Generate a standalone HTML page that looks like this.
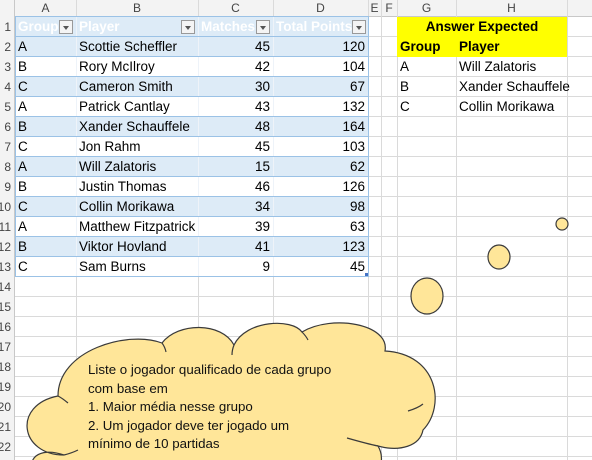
<!DOCTYPE html>
<html><head><meta charset="utf-8"><style>
*{margin:0;padding:0;box-sizing:border-box}
body{width:592px;height:460px;overflow:hidden;background:#fff;position:relative;font-family:"Liberation Sans",sans-serif;font-size:13.5px;color:#000}
.hl{position:absolute;left:0;width:592px;height:1px;background:#dadada}
.vl{position:absolute;top:0;height:460px;width:1px;background:#dadada}
.c{position:absolute;height:20px;line-height:20px;white-space:nowrap;overflow:hidden;padding:0 3px}
.r{text-align:right}
.band{position:absolute;left:15px;width:353px;height:20px;background:#ddebf7}
.tl{position:absolute;left:15px;width:353px;height:1px;background:#9bc2e6}
.tv{position:absolute;top:17px;width:1px;height:260px;background:#eef3f9}
.ch{position:absolute;top:0;height:16px;line-height:16px;text-align:center;color:#444;font-size:12px}
.rh{position:absolute;left:-8px;width:19px;height:20px;line-height:20px;text-align:right;color:#444;font-size:12px}
.dd{position:absolute;width:14px;height:14px;border:1px solid #999;background:#f4f4f4;top:20px}
.dd:after{content:"";position:absolute;left:3px;top:5px;border-left:3px solid transparent;border-right:3px solid transparent;border-top:4px solid #555}
.w{color:#fff;font-weight:bold}
</style></head><body>
<div style="position:absolute;left:0;top:0;width:592px;height:16px;background:#f3f3f3"></div>
<!-- bands -->
<div class="band" style="top:17px"></div>
<div class="band" style="top:37px"></div>
<div class="band" style="top:77px"></div>
<div class="band" style="top:117px"></div>
<div class="band" style="top:157px"></div>
<div class="band" style="top:197px"></div>
<div class="band" style="top:237px"></div>
<!-- grid -->
<div class="hl" style="top:16px;background:#c8c8c8"></div>
<div class="hl" style="top:36px"></div><div class="hl" style="top:56px"></div><div class="hl" style="top:76px"></div><div class="hl" style="top:96px"></div><div class="hl" style="top:116px"></div><div class="hl" style="top:136px"></div><div class="hl" style="top:156px"></div><div class="hl" style="top:176px"></div><div class="hl" style="top:196px"></div><div class="hl" style="top:216px"></div><div class="hl" style="top:236px"></div><div class="hl" style="top:256px"></div><div class="hl" style="top:276px"></div><div class="hl" style="top:296px"></div><div class="hl" style="top:316px"></div><div class="hl" style="top:336px"></div><div class="hl" style="top:356px"></div><div class="hl" style="top:376px"></div><div class="hl" style="top:396px"></div><div class="hl" style="top:416px"></div><div class="hl" style="top:436px"></div><div class="hl" style="top:456px"></div>
<div class="vl" style="left:76px"></div><div class="vl" style="left:198px"></div><div class="vl" style="left:273px"></div><div class="vl" style="left:368px"></div><div class="vl" style="left:381px"></div><div class="vl" style="left:397px"></div><div class="vl" style="left:456px"></div><div class="vl" style="left:567px"></div>
<div style="position:absolute;left:0;top:0;width:15px;height:460px;background:#f3f3f3;border-right:1px solid #c8c8c8"></div>
<div style="position:absolute;left:397px;top:17px;width:170px;height:40px;background:#ffff00"></div>
<!-- table borders -->
<div class="tv" style="left:76px"></div><div class="tv" style="left:198px"></div><div class="tv" style="left:273px"></div>
<div class="tl" style="top:16px"></div><div class="tl" style="top:36px"></div><div class="tl" style="top:56px"></div><div class="tl" style="top:76px"></div><div class="tl" style="top:96px"></div><div class="tl" style="top:116px"></div><div class="tl" style="top:136px"></div><div class="tl" style="top:156px"></div><div class="tl" style="top:176px"></div><div class="tl" style="top:196px"></div><div class="tl" style="top:216px"></div><div class="tl" style="top:236px"></div><div class="tl" style="top:256px"></div><div class="tl" style="top:276px"></div>
<div style="position:absolute;left:15px;top:16px;width:1px;height:261px;background:#9bc2e6"></div>
<div style="position:absolute;left:368px;top:16px;width:1px;height:261px;background:#9bc2e6"></div>
<div style="position:absolute;left:365px;top:273px;width:3px;height:3px;background:#4472c4"></div>
<!-- column headers -->
<div class="ch" style="left:15px;width:61px">A</div><div class="ch" style="left:76px;width:122px">B</div><div class="ch" style="left:198px;width:75px">C</div><div class="ch" style="left:273px;width:95px">D</div><div class="ch" style="left:368px;width:13px">E</div><div class="ch" style="left:381px;width:16px">F</div><div class="ch" style="left:397px;width:59px">G</div><div class="ch" style="left:456px;width:111px">H</div>
<!-- row headers -->
<div class="rh" style="top:17px">1</div><div class="rh" style="top:37px">2</div><div class="rh" style="top:57px">3</div><div class="rh" style="top:77px">4</div><div class="rh" style="top:97px">5</div><div class="rh" style="top:117px">6</div><div class="rh" style="top:137px">7</div><div class="rh" style="top:157px">8</div><div class="rh" style="top:177px">9</div><div class="rh" style="top:197px">10</div><div class="rh" style="top:217px">11</div><div class="rh" style="top:237px">12</div><div class="rh" style="top:257px">13</div><div class="rh" style="top:277px">14</div><div class="rh" style="top:297px">15</div><div class="rh" style="top:317px">16</div><div class="rh" style="top:337px">17</div><div class="rh" style="top:357px">18</div><div class="rh" style="top:377px">19</div><div class="rh" style="top:397px">20</div><div class="rh" style="top:417px">21</div><div class="rh" style="top:437px">22</div>
<!-- header row -->
<div class="c w" style="left:15px;top:17px;width:45px">Group</div>
<div class="c w" style="left:76px;top:17px;width:105px">Player</div>
<div class="c w" style="left:198px;top:17px;width:59px">Matches</div>
<div class="c w" style="left:273px;top:17px;width:80px">Total Points</div>
<div class="dd" style="left:59px"></div><div class="dd" style="left:181px"></div><div class="dd" style="left:256px"></div><div class="dd" style="left:352px"></div>
<!-- data -->
<div class="c" style="left:15px;top:37px">A</div><div class="c" style="left:76px;top:37px">Scottie Scheffler</div><div class="c r" style="left:198px;top:37px;width:75px">45</div><div class="c r" style="left:273px;top:37px;width:95px">120</div>
<div class="c" style="left:15px;top:57px">B</div><div class="c" style="left:76px;top:57px">Rory McIlroy</div><div class="c r" style="left:198px;top:57px;width:75px">42</div><div class="c r" style="left:273px;top:57px;width:95px">104</div>
<div class="c" style="left:15px;top:77px">C</div><div class="c" style="left:76px;top:77px">Cameron Smith</div><div class="c r" style="left:198px;top:77px;width:75px">30</div><div class="c r" style="left:273px;top:77px;width:95px">67</div>
<div class="c" style="left:15px;top:97px">A</div><div class="c" style="left:76px;top:97px">Patrick Cantlay</div><div class="c r" style="left:198px;top:97px;width:75px">43</div><div class="c r" style="left:273px;top:97px;width:95px">132</div>
<div class="c" style="left:15px;top:117px">B</div><div class="c" style="left:76px;top:117px">Xander Schauffele</div><div class="c r" style="left:198px;top:117px;width:75px">48</div><div class="c r" style="left:273px;top:117px;width:95px">164</div>
<div class="c" style="left:15px;top:137px">C</div><div class="c" style="left:76px;top:137px">Jon Rahm</div><div class="c r" style="left:198px;top:137px;width:75px">45</div><div class="c r" style="left:273px;top:137px;width:95px">103</div>
<div class="c" style="left:15px;top:157px">A</div><div class="c" style="left:76px;top:157px">Will Zalatoris</div><div class="c r" style="left:198px;top:157px;width:75px">15</div><div class="c r" style="left:273px;top:157px;width:95px">62</div>
<div class="c" style="left:15px;top:177px">B</div><div class="c" style="left:76px;top:177px">Justin Thomas</div><div class="c r" style="left:198px;top:177px;width:75px">46</div><div class="c r" style="left:273px;top:177px;width:95px">126</div>
<div class="c" style="left:15px;top:197px">C</div><div class="c" style="left:76px;top:197px">Collin Morikawa</div><div class="c r" style="left:198px;top:197px;width:75px">34</div><div class="c r" style="left:273px;top:197px;width:95px">98</div>
<div class="c" style="left:15px;top:217px">A</div><div class="c" style="left:76px;top:217px;width:121px">Matthew Fitzpatrick</div><div class="c r" style="left:198px;top:217px;width:75px">39</div><div class="c r" style="left:273px;top:217px;width:95px">63</div>
<div class="c" style="left:15px;top:237px">B</div><div class="c" style="left:76px;top:237px">Viktor Hovland</div><div class="c r" style="left:198px;top:237px;width:75px">41</div><div class="c r" style="left:273px;top:237px;width:95px">123</div>
<div class="c" style="left:15px;top:257px">C</div><div class="c" style="left:76px;top:257px">Sam Burns</div><div class="c r" style="left:198px;top:257px;width:75px">9</div><div class="c r" style="left:273px;top:257px;width:95px">45</div>
<!-- answer -->
<div class="c" style="left:397px;top:17px;width:170px;text-align:center;font-weight:bold">Answer Expected</div>
<div class="c" style="left:397px;top:37px;font-weight:bold">Group</div><div class="c" style="left:456px;top:37px;font-weight:bold">Player</div>
<div class="c" style="left:397px;top:57px">A</div><div class="c" style="left:456px;top:57px">Will Zalatoris</div>
<div class="c" style="left:397px;top:77px">B</div><div class="c" style="left:456px;top:77px;width:136px">Xander Schauffele</div>
<div class="c" style="left:397px;top:97px">C</div><div class="c" style="left:456px;top:97px">Collin Morikawa</div>
<!-- cloud -->
<svg style="position:absolute;left:0;top:0" width="592" height="460">
<g fill="#ffe699" stroke="#3a3a3a" stroke-width="1.2">
<ellipse cx="562" cy="224" rx="6" ry="6"/>
<ellipse cx="499" cy="257" rx="11" ry="12"/>
<ellipse cx="427" cy="296" rx="16" ry="18"/>
<path d="M64 455 C20 455 12 405 58 396 C58 350 128 330 162 343 C178 322 222 322 234 345 C246 320 292 318 302 332 C332 314 390 324 385 351 C438 354 446 406 423 430 C420 446 400 452 378 446 C385 458 380 470 375 475 L35 475 C25 460 38 446 64 455 Z"/>
</g>
<g fill="none" stroke="#3a3a3a" stroke-width="1.2">
<path d="M64 455 Q72 453 78 450"/>
<path d="M347 438 Q368 444 378 446"/>
<path d="M408 411 Q418 408 423 404"/>
<path d="M58 396 Q62 398 68 403"/>
<path d="M162 343 Q165 347 166 352"/>
<path d="M234 345 Q232 350 232 355"/>
<path d="M302 332 Q306 336 308 340"/>
</g>
</svg>
<div style="position:absolute;left:88px;top:361px;font-size:13.3px;line-height:18.6px;color:#111">Liste o jogador qualificado de cada grupo<br>com base em<br>1. Maior média nesse grupo<br>2. Um jogador deve ter jogado um<br>mínimo de 10 partidas</div>
</body></html>
